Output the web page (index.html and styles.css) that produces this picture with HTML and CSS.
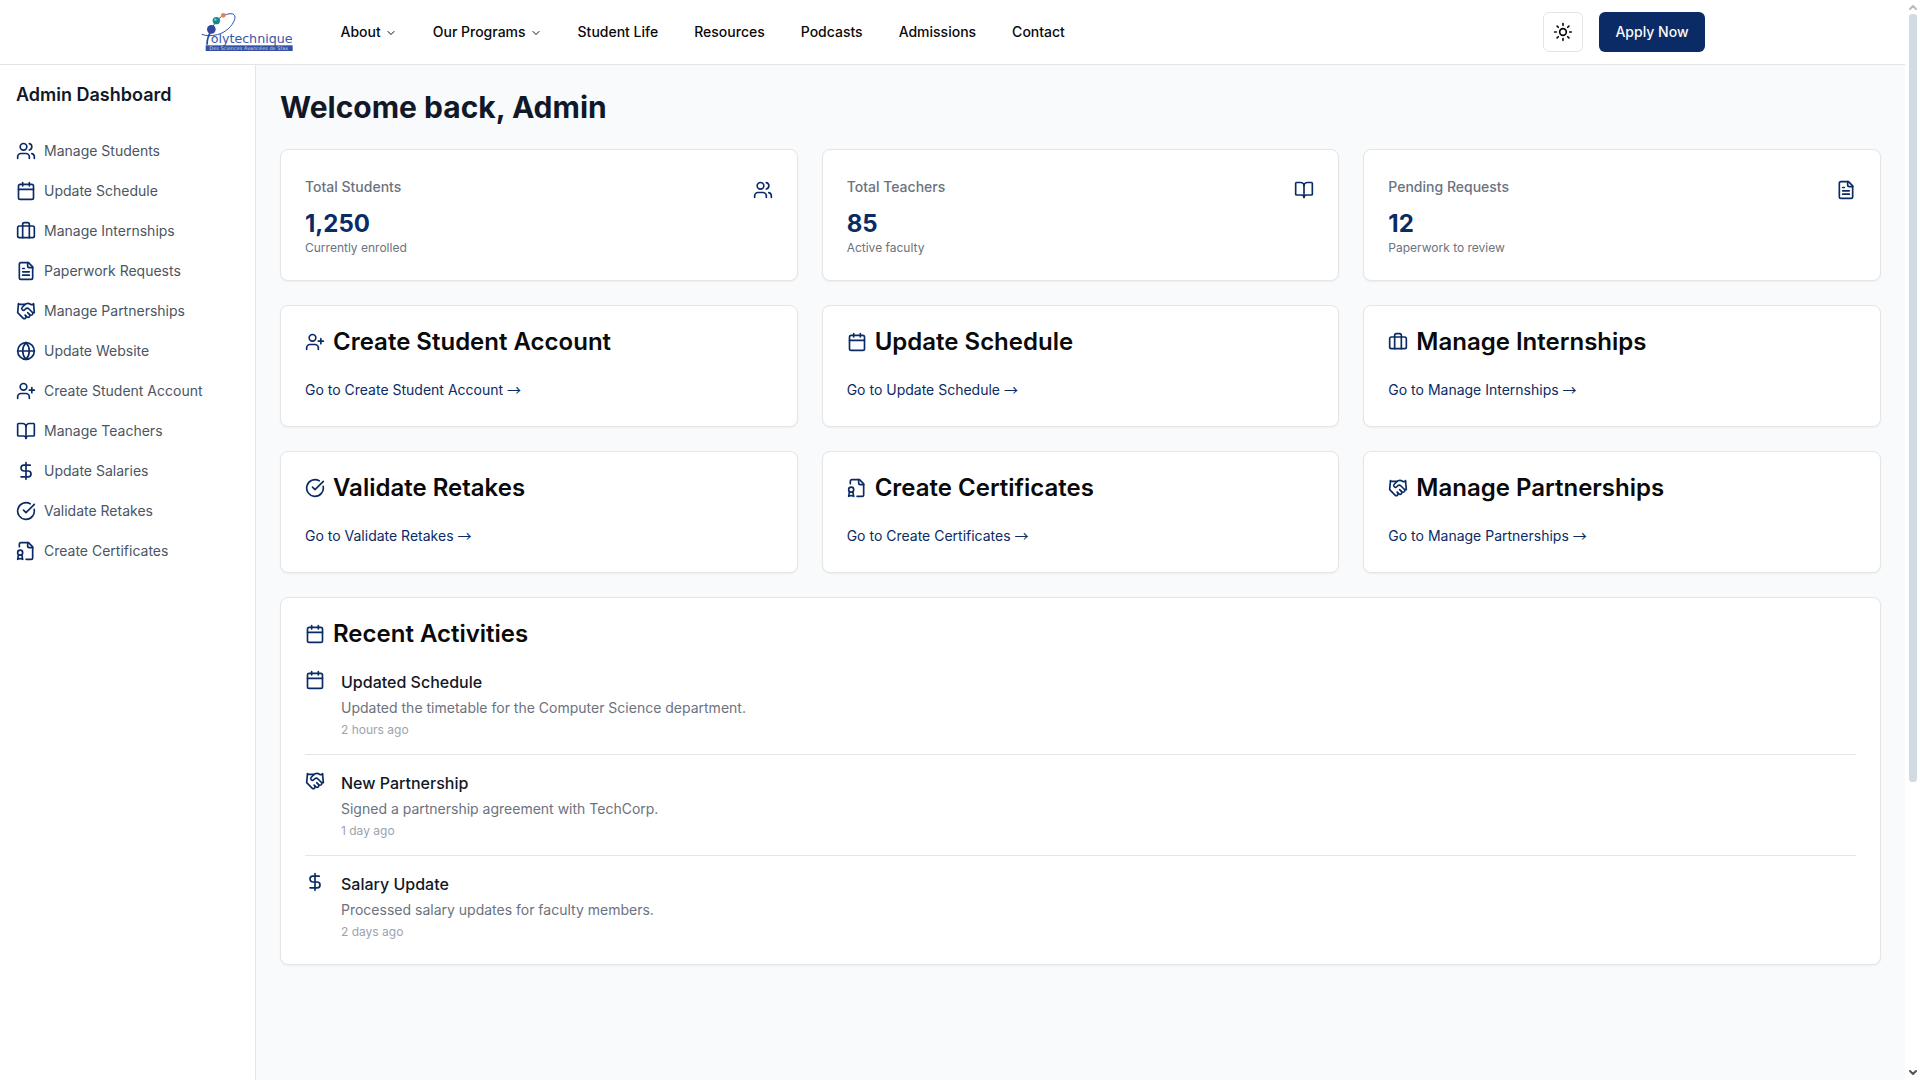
FILE: index.html
```html
<!DOCTYPE html>
<html lang="en">
<head>
<meta charset="utf-8">
<meta name="viewport" content="width=device-width, initial-scale=1">
<title>Admin Dashboard</title>
<link rel="stylesheet" href="styles.css">
</head>
<body>
<svg class="sprite" aria-hidden="true">
  <symbol id="users" viewBox="0 0 24 24"><path d="M16 21v-2a4 4 0 0 0-4-4H6a4 4 0 0 0-4 4v2"/><circle cx="9" cy="7" r="4"/><path d="M22 21v-2a4 4 0 0 0-3-3.87"/><path d="M16 3.13a4 4 0 0 1 0 7.75"/></symbol>
  <symbol id="calendar" viewBox="0 0 24 24"><path d="M8 2v4"/><path d="M16 2v4"/><rect width="18" height="18" x="3" y="4" rx="2"/><path d="M3 10h18"/></symbol>
  <symbol id="luggage" viewBox="0 0 24 24"><path d="M16 20V4a2 2 0 0 0-2-2h-4a2 2 0 0 0-2 2v16"/><rect width="20" height="14" x="2" y="6" rx="2"/></symbol>
  <symbol id="file-text" viewBox="0 0 24 24"><path d="M15 2H6a2 2 0 0 0-2 2v16a2 2 0 0 0 2 2h12a2 2 0 0 0 2-2V7Z"/><path d="M14 2v4a2 2 0 0 0 2 2h4"/><path d="M10 9H8"/><path d="M16 13H8"/><path d="M16 17H8"/></symbol>
  <symbol id="handshake" viewBox="0 0 24 24"><path d="m11 17 2 2a1 1 0 1 0 3-3"/><path d="m14 14 2.500 2.500a1 1 0 1 0 3-3l-3.880-3.880a3 3 0 0 0-4.240 0l-.880.880a1 1 0 1 1-3-3l2.810-2.810a5.790 5.790 0 0 1 7.060-.870l.470.280a2 2 0 0 0 1.420.250L21 4"/><path d="m21 3 1 11h-2"/><path d="M3 3 2 14l6.500 6.500a1 1 0 1 0 3-3"/><path d="M3 4h8"/></symbol>
  <symbol id="globe" viewBox="0 0 24 24"><circle cx="12" cy="12" r="10"/><path d="M12 2a14.500 14.500 0 0 0 0 20 14.500 14.500 0 0 0 0-20"/><path d="M2 12h20"/></symbol>
  <symbol id="user-plus" viewBox="0 0 24 24"><path d="M16 21v-2a4 4 0 0 0-4-4H6a4 4 0 0 0-4 4v2"/><circle cx="9" cy="7" r="4"/><path d="M19 8v6"/><path d="M22 11h-6"/></symbol>
  <symbol id="book-open" viewBox="0 0 24 24"><path d="M12 7v14"/><path d="M3 18a1 1 0 0 1-1-1V4a1 1 0 0 1 1-1h5a4 4 0 0 1 4 4 4 4 0 0 1 4-4h5a1 1 0 0 1 1 1v13a1 1 0 0 1-1 1h-6a3 3 0 0 0-3 3 3 3 0 0 0-3-3z"/></symbol>
  <symbol id="dollar" viewBox="0 0 24 24"><path d="M12 2v20"/><path d="M17 5H9.500a3.500 3.500 0 0 0 0 7h5a3.500 3.500 0 0 1 0 7H6"/></symbol>
  <symbol id="circle-check" viewBox="0 0 24 24"><path d="M21.801 10A10 10 0 1 1 17 3.335"/><path d="m9 11 3 3L22 4"/></symbol>
  <symbol id="file-badge" viewBox="0 0 24 24"><path d="M12 22h6a2 2 0 0 0 2-2V7l-5-5H6a2 2 0 0 0-2 2v3"/><path d="M14 2v4a2 2 0 0 0 2 2h4"/><path d="M5 17a3 3 0 1 0 0-6 3 3 0 0 0 0 6Z"/><path d="M7 16.500 8 22l-3-1-3 1 1-5.500"/></symbol>
  <symbol id="chevron" viewBox="0 0 24 24"><path d="m6 9 6 6 6-6"/></symbol>
  <symbol id="sun" viewBox="0 0 24 24"><circle cx="12" cy="12" r="4"/><path d="M12 2v2"/><path d="M12 20v2"/><path d="m4.930 4.930 1.410 1.410"/><path d="m17.660 17.660 1.410 1.410"/><path d="M2 12h2"/><path d="M20 12h2"/><path d="m6.340 17.660-1.410 1.410"/><path d="m19.070 4.930-1.410 1.410"/></symbol>
</svg>

<div class="window">
  <div class="page">
    <header class="topbar">
      <div class="topbar-inner">
        <a class="logo" href="#" aria-label="Polytechnique home">
          <svg viewBox="31 24 276 144" width="92" height="48" role="img" aria-label="Polytechnique des Sciences Avancées de Sfax">
            <path d="M33 103 C46 108 62 108 80 104 C104 98 126 78 132 58 C137 40 122 37 100 46" fill="none" stroke="#3553a4" stroke-width="3"/>
            <path d="M62 92 C54 104 49 120 49 134" fill="none" stroke="#2b4699" stroke-width="5"/>
            <path d="M98 46 C84 54 72 68 62 88" fill="none" stroke="#3553a4" stroke-width="3"/>
            <circle cx="62" cy="88" r="13" fill="#30499b"/>
            <circle cx="77" cy="62" r="11" fill="#16858d"/>
            <circle cx="74" cy="59" r="4" fill="#66c3c0"/>
            <circle cx="98" cy="46" r="7" fill="#ee7f4e"/>
            <text class="logo-name" x="60" y="130">olytechnique</text>
            <rect x="45" y="136" width="261" height="17" fill="#3350a2"/>
            <text class="logo-tag" x="56" y="149">Des Sciences Avancées de Sfax</text>
          </svg>
        </a>
        <nav class="menu" aria-label="Main">
          <button type="button">About<svg class="caret"><use href="#chevron"/></svg></button>
          <button type="button">Our Programs<svg class="caret"><use href="#chevron"/></svg></button>
          <a href="#">Student Life</a>
          <a href="#">Resources</a>
          <a href="#">Podcasts</a>
          <a href="#">Admissions</a>
          <a href="#">Contact</a>
        </nav>
        <div class="tools">
          <button type="button" class="theme" aria-label="Toggle theme"><svg class="icon"><use href="#sun"/></svg></button>
          <button type="button" class="apply">Apply Now</button>
        </div>
      </div>
    </header>

    <div class="body">
      <aside class="sidebar">
        <h2>Admin Dashboard</h2>
        <nav class="side-links" aria-label="Admin">
          <a href="#"><svg class="icon"><use href="#users"/></svg>Manage Students</a>
          <a href="#"><svg class="icon"><use href="#calendar"/></svg>Update Schedule</a>
          <a href="#"><svg class="icon"><use href="#luggage"/></svg>Manage Internships</a>
          <a href="#"><svg class="icon"><use href="#file-text"/></svg>Paperwork Requests</a>
          <a href="#"><svg class="icon"><use href="#handshake"/></svg>Manage Partnerships</a>
          <a href="#"><svg class="icon"><use href="#globe"/></svg>Update Website</a>
          <a href="#"><svg class="icon"><use href="#user-plus"/></svg>Create Student Account</a>
          <a href="#"><svg class="icon"><use href="#book-open"/></svg>Manage Teachers</a>
          <a href="#"><svg class="icon"><use href="#dollar"/></svg>Update Salaries</a>
          <a href="#"><svg class="icon"><use href="#circle-check"/></svg>Validate Retakes</a>
          <a href="#"><svg class="icon"><use href="#file-badge"/></svg>Create Certificates</a>
        </nav>
      </aside>

      <main class="content">
        <h1>Welcome back, Admin</h1>

        <div class="cards">
          <section class="card">
            <div class="stat-head"><h3>Total Students</h3><svg class="icon"><use href="#users"/></svg></div>
            <p class="stat-value">1,250</p>
            <p class="stat-note">Currently enrolled</p>
          </section>
          <section class="card">
            <div class="stat-head"><h3>Total Teachers</h3><svg class="icon"><use href="#book-open"/></svg></div>
            <p class="stat-value">85</p>
            <p class="stat-note">Active faculty</p>
          </section>
          <section class="card">
            <div class="stat-head"><h3>Pending Requests</h3><svg class="icon"><use href="#file-text"/></svg></div>
            <p class="stat-value">12</p>
            <p class="stat-note">Paperwork to review</p>
          </section>

          <section class="card">
            <h3 class="card-title"><svg class="icon"><use href="#user-plus"/></svg>Create Student Account</h3>
            <a class="go" href="#">Go to Create Student Account <span class="arrow-glyph">→</span></a>
          </section>
          <section class="card">
            <h3 class="card-title"><svg class="icon"><use href="#calendar"/></svg>Update Schedule</h3>
            <a class="go" href="#">Go to Update Schedule <span class="arrow-glyph">→</span></a>
          </section>
          <section class="card">
            <h3 class="card-title"><svg class="icon"><use href="#luggage"/></svg>Manage Internships</h3>
            <a class="go" href="#">Go to Manage Internships <span class="arrow-glyph">→</span></a>
          </section>
          <section class="card">
            <h3 class="card-title"><svg class="icon"><use href="#circle-check"/></svg>Validate Retakes</h3>
            <a class="go" href="#">Go to Validate Retakes <span class="arrow-glyph">→</span></a>
          </section>
          <section class="card">
            <h3 class="card-title"><svg class="icon"><use href="#file-badge"/></svg>Create Certificates</h3>
            <a class="go" href="#">Go to Create Certificates <span class="arrow-glyph">→</span></a>
          </section>
          <section class="card">
            <h3 class="card-title"><svg class="icon"><use href="#handshake"/></svg>Manage Partnerships</h3>
            <a class="go" href="#">Go to Manage Partnerships <span class="arrow-glyph">→</span></a>
          </section>
        </div>

        <section class="card">
          <h3 class="card-title"><svg class="icon"><use href="#calendar"/></svg>Recent Activities</h3>
          <ul class="activities">
            <li>
              <svg class="icon"><use href="#calendar"/></svg>
              <div class="activity">
                <h4>Updated Schedule</h4>
                <p class="detail">Updated the timetable for the Computer Science department.</p>
                <p class="when">2 hours ago</p>
              </div>
            </li>
            <li>
              <svg class="icon"><use href="#handshake"/></svg>
              <div class="activity">
                <h4>New Partnership</h4>
                <p class="detail">Signed a partnership agreement with TechCorp.</p>
                <p class="when">1 day ago</p>
              </div>
            </li>
            <li>
              <svg class="icon"><use href="#dollar"/></svg>
              <div class="activity">
                <h4>Salary Update</h4>
                <p class="detail">Processed salary updates for faculty members.</p>
                <p class="when">2 days ago</p>
              </div>
            </li>
          </ul>
        </section>
      </main>
    </div>
  </div>

  <div class="scrollbar" aria-hidden="true">
    <svg class="arrow arrow-up" viewBox="0 0 8 6"><path d="M1 5 4 2l3 3"/></svg>
    <div class="track"><div class="thumb"></div></div>
    <svg class="arrow" viewBox="0 0 8 6"><path d="m1 1 3 3 3-3"/></svg>
  </div>
</div>
</body>
</html>
```
FILE: styles.css
```css
:root {
  --navy: #0a2b66;
  --ink: #0a0a0a;
  --heading: #111827;
  --line: #e5e5e5;
}

* { box-sizing: border-box; margin: 0; padding: 0; }

body {
  background: #fff;
  color: var(--ink);
  font-family: Inter, "Liberation Sans", sans-serif;
  font-size: 16px;
  line-height: 24px;
}

a { color: inherit; text-decoration: none; }
button { font: inherit; color: inherit; background: none; border: 0; cursor: pointer; }
ul { list-style: none; }

.sprite { display: none; }

.icon {
  flex: none;
  width: 20px;
  height: 20px;
  color: var(--navy);
}

.icon, .caret, .arrow {
  fill: none;
  stroke: currentColor;
  stroke-width: 2;
  stroke-linecap: round;
  stroke-linejoin: round;
}

.window { display: flex; min-height: 100vh; }
.page { flex: 1; display: flex; flex-direction: column; min-width: 0; }

/* Top bar */
.topbar { border-bottom: 1px solid #e2e4e8; }

.topbar-inner {
  display: flex;
  align-items: center;
  max-width: 1536px;
  height: 64px;
  margin: 0 auto;
  padding: 0 16px;
}

.logo { display: flex; margin-right: 32px; }
.logo-name { font: 38px "DejaVu Sans", sans-serif; fill: #3957a8; }
.logo-tag { font: 15px "DejaVu Sans", sans-serif; fill: #c9d2ec; }

.menu { display: flex; gap: 4px; }

.menu a, .menu button {
  display: flex;
  align-items: center;
  height: 40px;
  padding: 0 16px;
  font-size: 14px;
  font-weight: 500;
  line-height: 20px;
  white-space: nowrap;
}

.caret { width: 12px; height: 12px; margin: 2px 0 0 4px; }

.tools { display: flex; gap: 16px; margin-left: auto; }

.theme {
  display: flex;
  align-items: center;
  justify-content: center;
  width: 40px;
  height: 40px;
  border: 1px solid var(--line);
  border-radius: 6px;
}

.theme .icon { color: var(--ink); }

.apply {
  height: 40px;
  padding: 0 16px;
  border-radius: 6px;
  background: var(--navy);
  color: #fafafa;
  font-size: 14px;
  font-weight: 500;
  white-space: nowrap;
}

/* Sidebar */
.body { flex: 1; display: flex; }

.sidebar {
  flex: none;
  width: 256px;
  padding: 16px;
  border-right: 1px solid #e2e4e8;
}

.sidebar h2 {
  margin-bottom: 22px;
  color: var(--heading);
  font-size: 18px;
  font-weight: 600;
  line-height: 28px;
}

.side-links a {
  display: flex;
  align-items: center;
  gap: 8px;
  height: 40px;
  color: #4b5563;
  font-size: 14px;
}

/* Main column */
.content {
  flex: 1;
  display: flex;
  flex-direction: column;
  gap: 24px;
  min-width: 0;
  padding: 24px;
  background: #f9fafb;
}

h1 {
  color: var(--heading);
  font-size: 30px;
  font-weight: 700;
  line-height: 36px;
}

.cards {
  display: grid;
  grid-template-columns: repeat(3, 1fr);
  gap: 24px;
}

.card {
  padding: 24px;
  border: 1px solid var(--line);
  border-radius: 8px;
  background: #fff;
  box-shadow: 0 1px 2px rgba(0, 0, 0, 0.05);
}

.stat-head {
  display: flex;
  justify-content: space-between;
  align-items: flex-start;
  padding: 6px 0 8px;
}

.stat-head h3 {
  color: #6b7280;
  font-size: 14px;
  font-weight: 500;
  line-height: 14px;
}

.stat-value {
  color: var(--navy);
  font-size: 24px;
  font-weight: 700;
  line-height: 32px;
}

.stat-note { color: #6b7280; font-size: 12px; line-height: 16px; }

.card-title {
  display: flex;
  align-items: center;
  gap: 8px;
  margin-bottom: 24px;
  font-size: 24px;
  font-weight: 600;
  line-height: 24px;
}

.go { display: block; color: var(--navy); font-size: 14px; }
.arrow-glyph { font-family: "Noto Sans CJK JP", sans-serif; line-height: 1; }

/* Activity feed */
.activities li { display: flex; gap: 16px; }

.activities li + li {
  margin-top: 16px;
  padding-top: 16px;
  border-top: 1px solid var(--line);
}

.activity { display: grid; gap: 4px; }
.activity h4 { color: var(--heading); font-size: 16px; font-weight: 500; }
.detail { color: #6b7280; font-size: 14px; line-height: 20px; }
.when { color: #9ca3af; font-size: 12px; line-height: 16px; }

/* Scrollbar */
.scrollbar {
  flex: none;
  display: flex;
  flex-direction: column;
  align-items: center;
  gap: 4px;
  width: 15px;
  padding: 4px 0;
}

.arrow { width: 8px; height: 6px; color: #555; }
.arrow-up { color: #bbb; }
.track { flex: 1; width: 8px; }
.thumb { height: 73%; border-radius: 3px; background: #d1dbe4; }
```
